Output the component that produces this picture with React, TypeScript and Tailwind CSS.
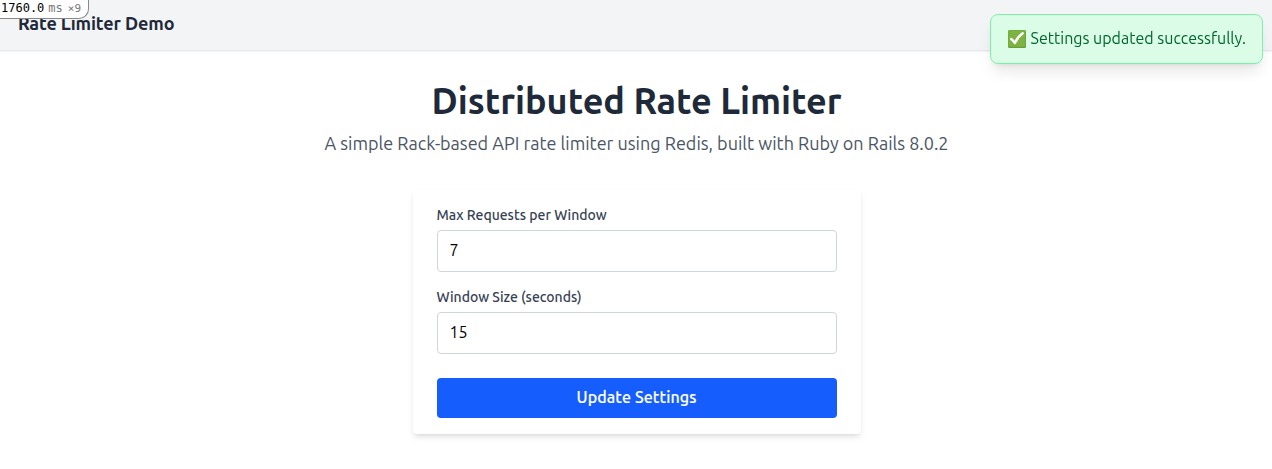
import { useState } from "react";

function Profiler() {
  return (
    <div className="absolute left-0 top-0 flex h-[19px] w-[89px] items-start whitespace-nowrap rounded-br-[10px] border-b border-r border-[#888] bg-white pl-px pt-px font-['DejaVu_Sans_Mono',monospace] text-[12px] leading-[14px] text-black">
      <span>1760.0</span>
      <span className="ml-[4px] text-[#777]">ms</span>
      <span className="ml-[5px] pt-px text-[11px] text-[#777]">×9</span>
    </div>
  );
}

function CheckIcon() {
  return (
    <svg viewBox="0 0 18 18" className="h-[18px] w-[18px] shrink-0" aria-hidden="true">
      <rect width="18" height="18" rx="1.5" fill="#689f38" />
      <rect x="0.3" y="0.3" width="17" height="16.5" rx="1.3" fill="#7cb342" />
      <path d="M3.2 9.1Q5.2 10.2 6.8 13Q9.7 6.7 14.7 3.2" fill="none" stroke="#fff" strokeWidth="2.5" strokeLinejoin="round" strokeLinecap="round" />
    </svg>
  );
}

function Field({ label, value, onChange }: { label: string; value: string; onChange: (v: string) => void }) {
  return (
    <label className="mb-4 block">
      <span className="-mt-px mb-[5px] block h-5 text-sm font-medium text-gray-700">{label}</span>
      <input
        value={value}
        onChange={(e) => onChange(e.target.value)}
        className="block h-[42px] w-full rounded-sm border border-gray-300 bg-white px-3 pb-[10px] pt-2 text-base leading-6 text-black outline-none"
      />
    </label>
  );
}

export default function App() {
  const [max, setMax] = useState("7");
  const [size, setSize] = useState("15");
  return (
    <div className="relative h-[469px] w-full overflow-hidden bg-white font-['Ubuntu','Noto_Sans',sans-serif]">
      <header className="flex h-[51px] items-start border-b border-gray-200 bg-gray-100 px-[18px] pt-[9px] text-lg leading-7 font-semibold text-gray-800 shadow-xs">
        <span className="whitespace-nowrap tracking-[-0.1px]">Rate Limiter Demo</span>
      </header>
      <Profiler />
      <div className="absolute right-[9px] top-[14px] flex h-[50px] w-[273px] items-center rounded-lg border border-green-300 bg-green-100 pb-px pl-[17px] text-base text-green-800 shadow-lg will-change-transform">
        <CheckIcon />
        <span className="-mt-px ml-[4.5px] whitespace-nowrap">Settings updated successfully.</span>
      </div>
      <main className="flex flex-col items-center pl-px pt-[30px]">
        <h1 className="h-10 whitespace-nowrap text-4xl leading-10 font-semibold text-gray-800">
          Distributed Rate Limiter
        </h1>
        <p className="mt-2 h-7 whitespace-nowrap text-lg leading-7 text-gray-600">
          A simple Rack-based API rate limiter using Redis, built with Ruby on Rails 8.0.2
        </p>
        <form
          onSubmit={(e) => e.preventDefault()}
          className="mt-[33px] w-md rounded-sm bg-white px-6 py-4 shadow-md"
        >
          <Field label="Max Requests per Window" value={max} onChange={setMax} />
          <Field label="Window Size (seconds)" value={size} onChange={setSize} />
          <button className="mt-6 block h-10 w-full rounded-sm bg-blue-600 pb-[2px] text-base font-medium tracking-[0.12px] text-white [-webkit-text-stroke:0.15px_white]">
            Update Settings
          </button>
        </form>
      </main>
    </div>
  );
}
